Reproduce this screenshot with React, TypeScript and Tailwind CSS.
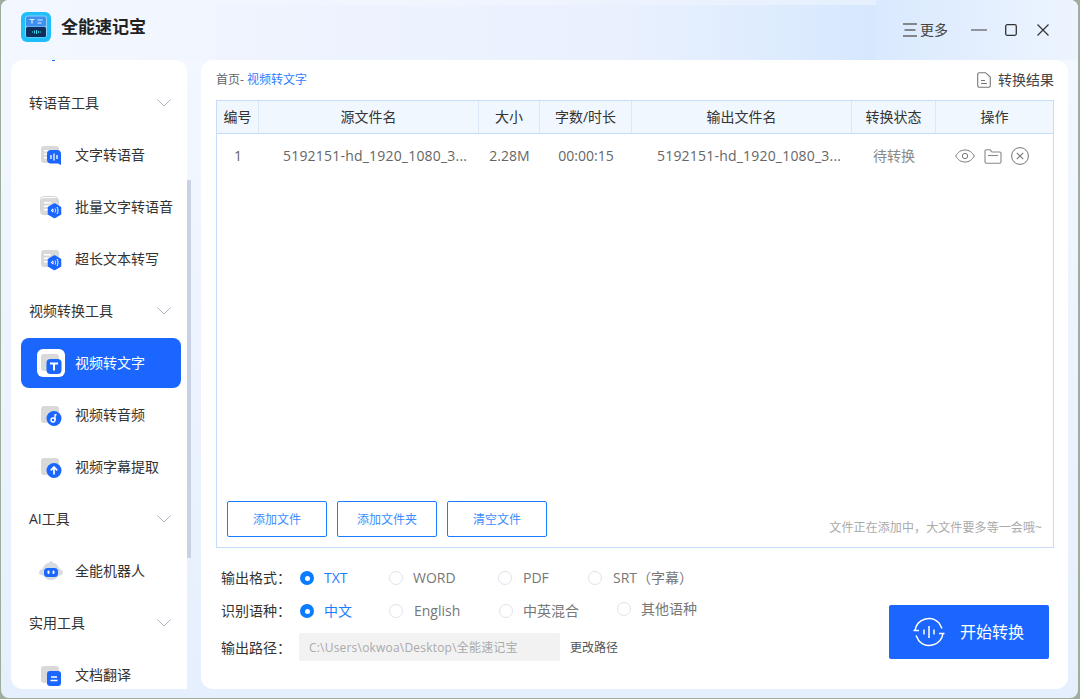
import React from 'react';

const blue = '#1a66ff';

// sidebar icons share a 22x22 box: grey card behind, blue badge in front
function CardIcon({ kind }: { kind: string }) {
  return (
    <svg width="22" height="22" viewBox="0 0 22 22" fill="none" className="overflow-visible">
      {kind === 'robot' ? (
        <>
          <path d="M11 2.500C6.500 2.500 3.600 5.300 3 8.500 1 9.200-1 10.600-1 12.500c0 1.800 2 3 4.500 3.200C5.300 18.500 8 20 11 20s5.700-1.500 7.500-4.300c2.500-.2 4.500-1.400 4.500-3.200 0-1.900-2-3.300-4-4-.6-3.200-3.500-6-8-6z" fill="#d6dae1" />
          <circle cx="11" cy="2.500" r="1.500" fill="#d6dae1" />
          <rect x="4" y="8" width="14" height="9" rx="3.500" fill={blue} />
          <rect x="7.500" y="10.500" width="2" height="3.500" rx="1" fill="#fff" />
          <rect x="12.500" y="10.500" width="2" height="3.500" rx="1" fill="#fff" />
        </>
      ) : (
        <>
          <rect x="1" y="2" width="18" height="17" rx="3" fill="#d9d9d9" />
          {kind === 'batch' && <rect x="0.500" y="0.500" width="17" height="18" rx="3" stroke="#d4d4d4" fill="none" />}
          {(kind === 'speech' || kind === 'batch' || kind === 'long') && (
            <>
              <rect x="4" y="6" width="7" height="1.500" fill="#fff" />
              <rect x="4" y="9.500" width="5" height="1.500" fill="#fff" />
              <rect x="4" y="13" width="5" height="1.500" fill="#fff" />
            </>
          )}
          {kind === 'speech' && (
            <>
              <path d="M11 6h6a4 4 0 0 1 4 4v11l-3-1.500h-7a4 4 0 0 1-4-4V10a4 4 0 0 1 4-4z" fill={blue} />
              <path d="M11 11v4M14 9.500v7M17 11v4" stroke="#fff" strokeWidth="1.300" />
            </>
          )}
          {(kind === 'batch' || kind === 'long') && (
            <>
              <path d="M14.500 8l6 3.500v6.500l-6 3.500-6-3.500v-6.500z" fill={blue} stroke={blue} strokeWidth="1.500" strokeLinejoin="round" />
              <path d="M11.500 14l1.500-1v3l-1.500-1zM15 12.500c.8 1 .8 3 0 4M17 11c1.300 1.800 1.300 5.200 0 7" stroke="#fff" strokeWidth="1" fill="none" />
            </>
          )}
          {kind === 'text' && (
            <>
              <rect x="6.500" y="7" width="15" height="15" rx="4" fill={blue} />
              <path d="M10 11.500h8M14 11.500v7" stroke="#fff" strokeWidth="2" />
            </>
          )}
          {kind === 'music' && (
            <>
              <circle cx="14" cy="14.500" r="7.500" fill={blue} />
              <circle cx="13" cy="16" r="2" stroke="#fff" strokeWidth="1.400" />
              <path d="M15 16v-5l1.500-.5" stroke="#fff" strokeWidth="1.400" />
            </>
          )}
          {kind === 'upload' && (
            <>
              <circle cx="14" cy="14.500" r="7.500" fill={blue} />
              <path d="M14 18.500v-7M10.800 14.300L14 11l3.200 3.300" stroke="#fff" strokeWidth="1.700" />
            </>
          )}
          {kind === 'doc' && (
            <>
              <rect x="7" y="7" width="14" height="15" rx="3" fill={blue} />
              <path d="M11 13h6M10.500 16.500h7" stroke="#fff" strokeWidth="1.500" />
            </>
          )}
        </>
      )}
    </svg>
  );
}

function Chevron() {
  return (
    <svg width="14" height="8" viewBox="0 0 14 8" fill="none">
      <path d="M.5.500L7 7 13.500.500" stroke="#a9b3c6" strokeWidth="1" />
    </svg>
  );
}

function SideHeading({ label }: { label: string }) {
  return (
    <div className="flex h-[52px] items-center justify-between pl-[18px] pr-[16px] text-[14px] text-[#333]">
      <span className="pb-[2px]">{label}</span>
      <Chevron />
    </div>
  );
}

function SideItem({ label, icon, active }: { label: string; icon: string; active?: boolean }) {
  return (
    <div className="flex h-[52px] items-center">
      <div className={`ml-[10px] flex h-[50px] w-[160px] items-center gap-[10px] rounded-[8px] pl-[16px] text-[14px] ${active ? 'bg-[#1a66ff] text-white' : 'text-[#333]'}`}>
        <span className={`flex h-[28px] w-[28px] items-center justify-center rounded-[6px] ${active ? 'bg-white' : ''}`}>
          <CardIcon kind={icon} />
        </span>
        <span className="pb-[2px]">{label}</span>
      </div>
    </div>
  );
}

function Radio({ label, checked, width, gap, lifted }: { label: string; checked?: boolean; width: string; gap: string; lifted?: boolean }) {
  return (
    <div className={`flex items-center ${width} ${gap} ${lifted ? 'mb-[4px]' : ''} text-[14px] ${checked ? 'text-[#1a7cff]' : 'text-[#777]'}`}>
      {checked ? (
        <span className="flex h-[14px] w-[14px] shrink-0 items-center justify-center rounded-full bg-[#0a7cff]">
          <span className="h-[5px] w-[5px] rounded-full bg-white" />
        </span>
      ) : (
        <span className="h-[14px] w-[14px] shrink-0 rounded-full border border-[#dfe3ec] bg-white" />
      )}
      <span className="whitespace-nowrap pb-[2px]">{label}</span>
    </div>
  );
}

function OutlineButton({ label }: { label: string }) {
  return (
    <button className="h-[36px] w-[100px] rounded-[2px] border border-[#1a7cff] bg-white pt-[2px] text-[12px] text-[#3c8cff]">
      {label}
    </button>
  );
}

const columns = 'grid grid-cols-[42px_220px_61px_92px_220px_84px_1fr]';
const headers = ['编号', '源文件名', '大小', '字数/时长', '输出文件名', '转换状态', '操作'];

export default function App() {
  return (
    <div className="h-[699px] w-[1080px] overflow-hidden bg-[#9dae9c] pb-[1px] pl-[1px] pr-[2px] font-['Open_Sans','Noto_Sans_CJK_SC',sans-serif]">
      <div className="flex h-full flex-col overflow-hidden rounded-[8px] bg-gradient-to-b from-[#f4f8ff] to-[#e6effe]">
        {/* Title bar */}
        <div className="flex h-[60px] shrink-0 items-end bg-gradient-to-r from-[#f3f7ff] via-[#eff4fe] to-[#e0edfd]">
          <div className="flex h-[60px] w-[215px] shrink-0 items-center pb-[6px] pl-[20px]">
            <svg width="30" height="30" viewBox="0 0 30 30" fill="none">
              <defs>
                <linearGradient id="logo" x1="0" y1="0" x2="30" y2="30">
                  <stop offset="0" stopColor="#1fc0fa" />
                  <stop offset="1" stopColor="#0e78fb" />
                </linearGradient>
              </defs>
              <rect width="30" height="30" rx="6" fill="url(#logo)" />
              <rect x="4" y="3.500" width="22" height="22" rx="3" fill="#8fd0fb" />
              <rect x="5" y="4.500" width="20" height="10" rx="1.500" fill="#3d8ff0" />
              <rect x="5" y="15" width="20" height="10" rx="1.500" fill="#0e2f5c" />
              <path d="M8.500 7.500h5M11 7.500v4M16.500 8h5M16.500 11h4" stroke="#dff2ff" strokeWidth="1.200" />
              <path d="M11 20h1M13.500 18.500v3M15.500 18v4M17.500 19v2M19 20h1" stroke="#38d6e8" strokeWidth="1" />
            </svg>
            <span className="ml-[10px] text-[17px] font-bold text-[#222]">全能速记宝</span>
          </div>
          <div className="h-[55px] w-[660px] shrink-0 bg-gradient-to-r from-[#eff4fe] via-[#eaf1fe] via-60% to-[#d6e8fe]" />
          <div className="flex h-[60px] flex-1 items-center bg-gradient-to-r from-[#d9e9fe] to-[#edf4ff] pl-[27px]">
            <svg width="14" height="14" viewBox="0 0 14 14" fill="none">
              <path d="M0 1h14M1.500 7h11M0 13h14" stroke="#666" strokeWidth="1.300" />
            </svg>
            <span className="ml-[3px] pb-[2px] text-[14px] text-[#444]">更多</span>
            <svg className="ml-[23px]" width="16" height="2" viewBox="0 0 16 2" fill="none">
              <path d="M0 1h16" stroke="#666" strokeWidth="1.300" />
            </svg>
            <svg className="ml-[18px]" width="12" height="12" viewBox="0 0 12 12" fill="none">
              <rect x=".700" y=".700" width="10.600" height="10.600" rx="1.500" stroke="#333" strokeWidth="1.300" />
            </svg>
            <svg className="ml-[20px]" width="12" height="12" viewBox="0 0 12 12" fill="none">
              <path d="M.500.500l11 11M11.500.500l-11 11" stroke="#333" strokeWidth="1.200" />
            </svg>
          </div>
        </div>

        <div className="flex min-h-0 flex-1 pb-[9px] pl-[10px] pr-[10px]">
          {/* Sidebar */}
          <div className="w-[176px] shrink-0 overflow-hidden rounded-[12px] rounded-br-none bg-white">
            <div className="ml-[41px] h-[1px] w-[3px] bg-[#1a66ff]" />
            <div className="h-[16px]" />
            <SideHeading label="转语音工具" />
            <SideItem label="文字转语音" icon="speech" />
            <SideItem label="批量文字转语音" icon="batch" />
            <SideItem label="超长文本转写" icon="long" />
            <SideHeading label="视频转换工具" />
            <SideItem label="视频转文字" icon="text" active />
            <SideItem label="视频转音频" icon="music" />
            <SideItem label="视频字幕提取" icon="upload" />
            <SideHeading label="AI工具" />
            <SideItem label="全能机器人" icon="robot" />
            <SideHeading label="实用工具" />
            <SideItem label="文档翻译" icon="doc" />
          </div>
          <div className="mt-[120px] h-[378px] w-[4px] shrink-0 bg-[#c8d2e4]" />

          {/* Main panel */}
          <div className="ml-[10px] flex min-w-0 flex-1 flex-col rounded-[12px] bg-white px-[14px] pl-[15px]">
            <div className="flex h-[40px] shrink-0 items-center justify-between text-[12px]">
              <div className="pb-[1px]">
                <span className="text-[#666]">首页-</span>
                <span className="ml-[3px] text-[#2f7cff]">视频转文字</span>
              </div>
              <div className="flex items-center gap-[7px] text-[14px] text-[#444]">
                <svg width="14" height="16" viewBox="0 0 14 16" fill="none">
                  <path d="M2.500.700h6L13.300 5v8.500a1.800 1.800 0 0 1-1.800 1.800h-9A1.800 1.800 0 0 1 .700 13.500v-11A1.800 1.800 0 0 1 2.500.700z" stroke="#777" strokeWidth="1.100" />
                  <path d="M4 8.500h4M4 11.500h6" stroke="#777" strokeWidth="1.100" />
                </svg>
                <span className="pb-[2px]">转换结果</span>
              </div>
            </div>

            <div className="flex h-[448px] shrink-0 flex-col border border-[#c5dcfa]">
              <div className={`${columns} h-[33px] shrink-0 border-b border-[#c5dcfa] bg-[#f1f7fe] text-[14px] text-[#333]`}>
                {headers.map((h, i) => (
                  <div key={h} className={`flex items-center justify-center pb-[2px] ${i < 6 ? 'border-r border-[#dbe8f8]' : ''}`}>
                    {h}
                  </div>
                ))}
              </div>
              <div className={`${columns} h-[42px] shrink-0 items-center text-center text-[14px] text-[#666]`}>
                <div>1</div>
                <div className="whitespace-nowrap pl-[24px] text-left tracking-[0.2px]">5192151-hd_1920_1080_3...</div>
                <div>2.28M</div>
                <div>00:00:15</div>
                <div className="whitespace-nowrap pl-[25px] text-left tracking-[0.2px]">5192151-hd_1920_1080_3...</div>
                <div className="text-[#888]">待转换</div>
                <div className="mt-[2px] flex items-center justify-center gap-[9px] pr-[6px]">
                  <svg width="20" height="14" viewBox="0 0 20 14" fill="none">
                    <path d="M.700 7C3 3 6 1 10 1s7 2 9.300 6c-2.300 4-5.300 6-9.300 6S3 11 .700 7z" stroke="#777" strokeWidth="1" />
                    <circle cx="10" cy="7" r="2.700" stroke="#777" strokeWidth="1" />
                  </svg>
                  <svg width="18" height="15" viewBox="0 0 18 15" fill="none">
                    <path d="M1 13V2a1.200 1.200 0 0 1 1.200-1.200h4L8 3h7.800A1.200 1.200 0 0 1 17 4.200V13a1.200 1.200 0 0 1-1.200 1.200H2.200A1.200 1.200 0 0 1 1 13z" stroke="#888" strokeWidth="1.100" />
                    <path d="M4 6.500h10" stroke="#888" strokeWidth="1.100" />
                  </svg>
                  <svg width="18" height="18" viewBox="0 0 18 18" fill="none">
                    <circle cx="9" cy="9" r="8.400" stroke="#777" strokeWidth="1" />
                    <path d="M5.800 5.800l6.400 6.400M12.200 5.800l-6.400 6.400" stroke="#777" strokeWidth="1.100" />
                  </svg>
                </div>
              </div>
              <div className="flex-1" />
              <div className="flex items-end justify-between pb-[10px] pl-[10px] pr-[11px]">
                <div className="flex gap-[10px]">
                  <OutlineButton label="添加文件" />
                  <OutlineButton label="添加文件夹" />
                  <OutlineButton label="清空文件" />
                </div>
                <span className="text-[12px] tracking-[0.1px] text-[#aaa]">文件正在添加中，大文件要多等一会哦~</span>
              </div>
            </div>

            {/* Output options */}
            <div className="flex items-end justify-between pt-[18px] pr-[5px]">
              <div className="flex flex-col pl-[5px]">
                <div className="flex h-[24px] items-center">
                  <span className="w-[79px] pb-[2px] text-[14px] text-[#333]">输出格式：</span>
                  <Radio label="TXT" checked width="w-[89px]" gap="gap-[10px]" />
                  <Radio label="WORD" width="w-[109px]" gap="gap-[10px]" />
                  <Radio label="PDF" width="w-[90px]" gap="gap-[11px]" />
                  <Radio label="SRT（字幕）" width="w-[110px]" gap="gap-[11px]" />
                </div>
                <div className="mt-[9px] flex h-[24px] items-center">
                  <span className="w-[79px] pb-[2px] text-[14px] text-[#333]">识别语种：</span>
                  <Radio label="中文" checked width="w-[89px]" gap="gap-[10px]" />
                  <Radio label="English" width="w-[110px]" gap="gap-[11px]" />
                  <Radio label="中英混合" width="w-[118px]" gap="gap-[10px]" />
                  <Radio label="其他语种" width="w-[90px]" gap="gap-[10px]" lifted />
                </div>
                <div className="mt-[10px] flex h-[28px] items-center">
                  <span className="w-[78px] text-[14px] text-[#333]">输出路径：</span>
                  <div className="flex h-[28px] w-[261px] items-center rounded-[2px] bg-[#f2f2f2] pl-[10px] pt-[1px] text-[12px] tracking-[0.2px] text-[#aaa]">
                    C:\Users\okwoa\Desktop\全能速记宝
                  </div>
                  <span className="ml-[10px] pt-[2px] text-[12px] text-[#555]">更改路径</span>
                </div>
              </div>
              <button className="mb-[2px] flex h-[54px] w-[160px] items-center rounded-[2px] bg-[#1a66ff] pl-[24px] text-[16px] text-white">
                <svg width="32" height="32" viewBox="0 0 32 32" fill="none">
                  <path d="M2 14.500A14 14 0 0 1 26 7l3 5.500M30 17.500A14 14 0 0 1 6 25L3 19.500" stroke="#fff" strokeWidth="1.500" />
                  <path d="M.500 14.500H6M26 17.500h5.500" stroke="#fff" strokeWidth="1.500" />
                  <path d="M11 13.500v5M16 10v12M21 13.500v5" stroke="#fff" strokeWidth="1.500" />
                </svg>
                <span className="ml-[15px] pb-[1px]">开始转换</span>
              </button>
            </div>
          </div>
        </div>
      </div>
    </div>
  );
}
